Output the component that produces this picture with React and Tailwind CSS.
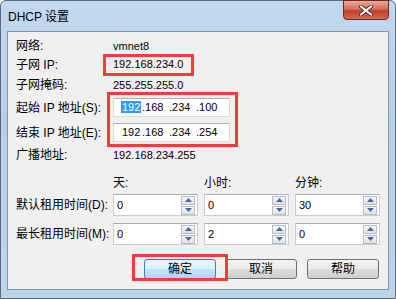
import React from 'react';

const FONT = { fontFamily: '"Liberation Sans", "Noto Sans CJK SC", sans-serif' };

function Arrow({ up }) {
  return (
    <svg width="7" height="4" viewBox="0 0 7 4">
      <polygon points={up ? '0,4 7,4 3.5,0' : '0,0 7,0 3.5,4'} fill="#4d66a0" />
    </svg>
  );
}

function Spin({ value }) {
  return (
    <div className="w-[85px] h-[22px] flex border border-[#c9cdd3] border-t-[#abadb3] bg-white">
      <div className="flex-1 pl-[3px] text-[11px] flex items-center text-black">{value}</div>
      <div className="w-[14px] mr-[2px] flex flex-col justify-center gap-[1px]">
        <div className="h-[9px] border border-[#b6bdc7] bg-[linear-gradient(to_bottom,#f7f7f7,#dde2e8)] flex items-center justify-center">
          <Arrow up />
        </div>
        <div className="h-[9px] border border-[#b6bdc7] bg-[linear-gradient(to_bottom,#f7f7f7,#dde2e8)] flex items-center justify-center">
          <Arrow />
        </div>
      </div>
    </div>
  );
}

function IpField({ parts, selectFirst }) {
  return (
    <div className="w-[117px] h-[19px] border border-[#d6d9de] border-t-[#abadb3] bg-white flex items-center pl-[7px] text-[11px] text-black">
      <span className="w-[21px]">
        <span className={selectFirst ? 'bg-[#3399ff] text-white px-[1px]' : 'px-[1px]'}>{parts[0]}</span>
      </span>
      <span className="w-[27px]">.{parts[1]}</span>
      <span className="w-[27px]">.{parts[2]}</span>
      <span>.{parts[3]}</span>
    </div>
  );
}

function Row({ label, children, className = '' }) {
  return (
    <div className={`flex items-center ${className}`}>
      <div className="w-[97px] text-[12px] whitespace-nowrap">{label}</div>
      {children}
    </div>
  );
}

export default function App() {
  const btn = 'w-[72px] h-[20px] rounded-[3px] border text-[12px] flex items-center justify-center';
  return (
    <div className="relative w-[396px] h-[299px] overflow-hidden bg-white" style={FONT}>
      {/* window frame */}
      <div className="w-full h-full flex flex-col rounded-t-[6px] border border-[#5b6a7c] bg-[linear-gradient(to_bottom,#c3d8ee,#b7d0ea_40%,#bcd4ec)]">
        {/* title bar */}
        <div className="h-[30px] flex items-start">
          <div className="pl-[7px] pt-[7px] text-[12px] text-black">DHCP 设置</div>
          <div className="ml-auto mr-[6px] w-[46px] h-[20px] -mt-[1px] rounded-b-[4px] border border-[#6b2a20] bg-[linear-gradient(to_bottom,#e9a99a,#d2705a_45%,#c0412a_55%,#d06a4f)] flex items-center justify-center">
            <svg width="14" height="11" viewBox="0 0 14 11">
              <path d="M2 1.5 L12 9.5 M12 1.5 L2 9.5" stroke="#5a2a22" strokeWidth="4" strokeLinecap="round" />
              <path d="M2 1.5 L12 9.5 M12 1.5 L2 9.5" stroke="#ffffff" strokeWidth="2.2" strokeLinecap="round" />
            </svg>
          </div>
        </div>

        {/* client area */}
        <div className="mx-[6px] h-[259px] border border-[#8593a5] bg-[#f0f0f0] pl-[8px] pt-[5px] flex flex-col text-black">
          <Row label="网络:" className="h-[18px]">
            <span className="text-[11px]">vmnet8</span>
          </Row>
          <Row label="子网 IP:" className="h-[19px]">
            <span className="text-[11px]">192.168.234.0</span>
          </Row>
          <Row label="子网掩码:" className="h-[18px] mt-[2px]">
            <span className="text-[11px]">255.255.255.0</span>
          </Row>
          <Row label="起始 IP 地址(S):" className="h-[19px] mt-[4px]">
            <IpField parts={['192', '168', '234', '100']} selectFirst />
          </Row>
          <Row label="结束 IP 地址(E):" className="h-[19px] mt-[6px]">
            <IpField parts={['192', '168', '234', '254']} />
          </Row>
          <Row label="广播地址:" className="h-[18px] mt-[4px]">
            <span className="text-[11px]">192.168.234.255</span>
          </Row>
          <Row label="" className="h-[18px] mt-[10px]">
            <div className="flex gap-[6px] text-[12px]">
              <div className="w-[85px]">天:</div>
              <div className="w-[85px]">小时:</div>
              <div className="w-[85px]">分钟:</div>
            </div>
          </Row>
          <Row label="默认租用时间(D):" className="h-[22px] mt-[2px]">
            <div className="flex gap-[6px]">
              <Spin value="0" />
              <Spin value="0" />
              <Spin value="30" />
            </div>
          </Row>
          <Row label="最长租用时间(M):" className="h-[22px] mt-[7px]">
            <div className="flex gap-[6px]">
              <Spin value="0" />
              <Spin value="2" />
              <Spin value="0" />
            </div>
          </Row>
          <div className="mt-[14px] flex">
            <div className={`${btn} ml-[128px] border-[#3c7fb1] bg-[linear-gradient(to_bottom,#eaf6fd_0%,#d9f0fc_50%,#bee6fd_50%,#a7d9f5_100%)]`}>确定</div>
            <div className={`${btn} ml-[9px] border-[#707070] bg-[linear-gradient(to_bottom,#f2f2f2_0%,#ebebeb_50%,#dddddd_50%,#cfcfcf_100%)]`}>取消</div>
            <div className={`${btn} ml-[10px] border-[#707070] bg-[linear-gradient(to_bottom,#f2f2f2_0%,#ebebeb_50%,#dddddd_50%,#cfcfcf_100%)]`}>帮助</div>
          </div>
        </div>
      </div>

      {/* red annotation boxes */}
      <div className="absolute left-[103px] top-[54px] w-[91px] h-[22px] border-[3px] border-[#f23c3c]" />
      <div className="absolute left-[107px] top-[92px] w-[131px] h-[55px] border-[3px] border-[#f23c3c]" />
      <div className="absolute left-[132px] top-[254px] w-[96px] h-[27px] border-[3px] border-[#f23c3c]" />
    </div>
  );
}
